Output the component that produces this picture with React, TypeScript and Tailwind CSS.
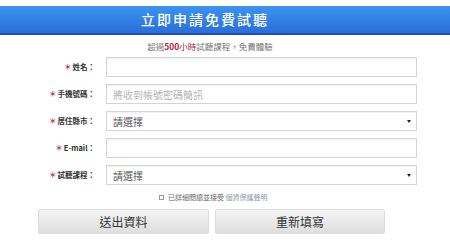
import React from 'react';

const CJK = "font-['Noto_Sans_CJK_TC','Noto_Sans',sans-serif]";

function Label({ text }: { text: string }) {
  return (
    <div className="flex items-center justify-end h-[20px] text-[7.5px] font-bold text-[#333] pr-[1px]">
      <span className="text-[#c0305a] mr-[1px]">＊</span>
      <span>{text}：</span>
    </div>
  );
}

function Field({ placeholder, value, select }: { placeholder?: string; value?: string; select?: boolean }) {
  return (
    <div className="relative h-[20px] w-[311px] border border-[#d4d4d4] bg-white shadow-[inset_0_1px_1px_rgba(0,0,0,0.06)] flex items-center pl-[6px]">
      {placeholder && <span className="text-[10px] text-[#b4b4b4]">{placeholder}</span>}
      {value && <span className="text-[10px] text-[#555]">{value}</span>}
      {select && (
        <svg className="absolute right-[5px] top-[8px]" width="4" height="3" viewBox="0 0 4 3">
          <path d="M0 0h4L2 3z" fill="#222" />
        </svg>
      )}
    </div>
  );
}

export default function App() {
  return (
    <div className={`w-[450px] h-[250px] bg-white overflow-hidden ${CJK}`}>
      {/* header bar */}
      <div className="mt-[6px] h-[29px] bg-gradient-to-b from-[#3c93f2] to-[#2a6ed9] border-b-2 border-[#1b4fb3] flex items-center justify-center pr-[40px]">
        <h1 className="text-[14px] font-medium text-white tracking-[2px]">立即申請免費試聽</h1>
      </div>

      {/* subtitle */}
      <div className="h-[22px] pt-[1px] flex items-center justify-center pr-[30px] text-[8.5px] text-[#777]">
        超過<span className="text-[#b3203a] font-bold">500</span><span className="text-[#b3203a]">小時</span>試聽課程，免費體驗
      </div>

      {/* form rows */}
      <div className="grid grid-cols-[96px_311px] gap-x-[10px] gap-y-[7px]">
        <Label text="姓名" />
        <Field />
        <Label text="手機號碼" />
        <Field placeholder="將收到帳號密碼簡訊" />
        <Label text="居住縣市" />
        <Field value="請選擇" select />
        <Label text="E-mail" />
        <Field />
        <Label text="試聽課程" />
        <Field value="請選擇" select />
      </div>

      {/* agreement */}
      <div className="mt-[7px] pl-[159px] flex items-center gap-[4px] text-[7px] text-[#666] h-[10px]">
        <span className="w-[5px] h-[5px] border border-[#999] bg-white" />
        <span>
          已詳細閱讀並接受 <span className="text-[#8a95a8]">個資保護聲明</span>
        </span>
      </div>

      {/* buttons */}
      <div className="mt-[7px] pl-[38px] flex gap-[6px]">
        <button className="w-[171px] h-[25px] rounded-[2px] border border-[#dcdcdc] bg-gradient-to-b from-[#f4f4f4] to-[#dedede] text-[12px] text-[#333]">
          送出資料
        </button>
        <button className="w-[170px] h-[25px] rounded-[2px] border border-[#dcdcdc] bg-gradient-to-b from-[#f4f4f4] to-[#dedede] text-[12px] text-[#333]">
          重新填寫
        </button>
      </div>
    </div>
  );
}
